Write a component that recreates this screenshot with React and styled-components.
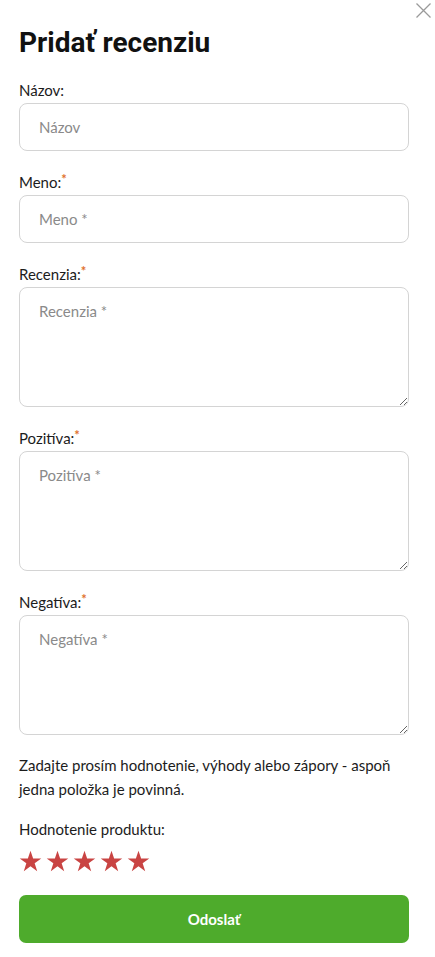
import React from "react";
import styled, { createGlobalStyle } from "styled-components";

const Global = createGlobalStyle`
  html, body { margin: 0; padding: 0; background: #fff; }
  * { box-sizing: border-box; }
`;

const Panel = styled.div`
  position: relative;
  width: 435px;
  padding: 26px 26px 15px 19px;
  font-family: Lato, sans-serif;
  color: #1c1c1c;
`;

const Close = styled.button`
  position: absolute;
  top: 2px;
  right: 3px;
  width: 17px;
  height: 17px;
  padding: 0;
  border: 0;
  background: none;
  cursor: pointer;
  svg { display: block; }
`;

const Title = styled.h1`
  margin: 0 0 20px;
  font-family: Roboto, sans-serif;
  font-weight: 700;
  font-size: 28px;
  line-height: 34px;
  color: #111;
`;

const Field = styled.div`
  display: flex;
  flex-direction: column;
  gap: 3px;
  margin-bottom: ${(p) => (p.$last ? "18px" : "21px")};
`;

const Label = styled.label`
  display: block;
  font-size: 15px;
  line-height: 20px;
  color: #1c1c1c;
`;

const Req = styled.span`
  color: #e0702a;
  font-size: 13px;
  font-weight: 700;
  vertical-align: top;
  line-height: 14px;
`;

const inputBase = `
  width: 390px;
  border: 1px solid #d4d4d4;
  border-radius: 8px;
  padding: 0 19px;
  font-family: Lato, sans-serif;
  font-size: 15px;
  color: #1c1c1c;
  background: #fff;
  outline: none;
  &::placeholder { color: #8a8a8a; }
`;

const Input = styled.input`
  ${inputBase}
  height: 48px;
`;

const Area = styled.textarea`
  ${inputBase}
  height: 120px;
  padding-top: 14px;
  resize: vertical;
  display: block;
`;

const Note = styled.p`
  margin: 0 0 18px;
  font-size: 15px;
  line-height: 24px;
`;

const Stars = styled.div`
  display: flex;
  gap: 4px;
  margin: 11px 0 23px;
`;

const Button = styled.button`
  display: block;
  width: 390px;
  height: 48px;
  border: 0;
  border-radius: 7px;
  background: #4eab2c;
  color: #fff;
  font-family: Lato, sans-serif;
  font-weight: 700;
  font-size: 15px;
  cursor: pointer;
`;

const Star = () => (
  <svg width="23" height="22" viewBox="0 0 24 23">
    <path
      d="M12 0.8l2.75 8.1h8.5l-6.9 5.05 2.65 8.15L12 17.05 5 22.1l2.65-8.15L0.75 8.9h8.5z"
      fill="#c94443"
    />
  </svg>
);

const fields = [
  { label: "Názov:", ph: "Názov", req: false, area: false },
  { label: "Meno:", ph: "Meno *", req: true, area: false },
  { label: "Recenzia:", ph: "Recenzia *", req: true, area: true },
  { label: "Pozitíva:", ph: "Pozitíva *", req: true, area: true },
  { label: "Negatíva:", ph: "Negatíva *", req: true, area: true },
];

export default function App() {
  return (
    <>
      <Global />
      <Panel>
        <Close aria-label="Zavrieť">
          <svg width="17" height="17" viewBox="0 0 17 17">
            <path d="M1.5 1.5L15.5 15.5M15.5 1.5L1.5 15.5" stroke="#9a9a9a" strokeWidth="1.3" />
          </svg>
        </Close>
        <Title>Pridať recenziu</Title>
        {fields.map((f, i) => (
          <Field key={f.label} $last={i === fields.length - 1}>
            <Label>
              {f.label}
              {f.req && <Req>*</Req>}
            </Label>
            {f.area ? <Area placeholder={f.ph} /> : <Input placeholder={f.ph} />}
          </Field>
        ))}
        <Note>
          Zadajte prosím hodnotenie, výhody alebo zápory - aspoň jedna položka je povinná.
        </Note>
        <Label>Hodnotenie produktu:</Label>
        <Stars>
          {[0, 1, 2, 3, 4].map((i) => (
            <Star key={i} />
          ))}
        </Stars>
        <Button>Odoslať</Button>
      </Panel>
    </>
  );
}
